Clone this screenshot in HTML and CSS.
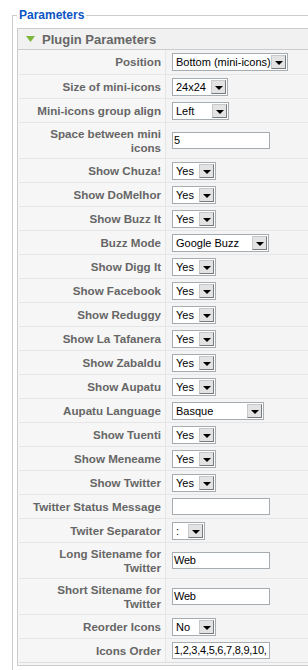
FILE: index.html
```html
<!DOCTYPE html>
<html lang="en">
<head>
    <meta charset="UTF-8">
    <title>Parameters</title>
    <link rel="stylesheet" href="styles.css">
</head>
<body>
    <fieldset class="params">
        <legend>Parameters</legend>
        <div class="pane">
            <div class="pane-title">
                <svg class="toggle" width="9" height="6" viewBox="0 0 9 6"><polygon points="0,0 9,0 4.5,6" fill="#7bb83b"/></svg>
                <span>Plugin Parameters</span>
            </div>
            <div class="paramlist">
                <div class="row">
                    <div class="key">Position</div>
                    <div class="value"><span class="sel w-position"><span class="sel-text">Bottom (mini-icons)</span><span class="sel-btn"><i></i></span></span></div>
                </div>
                <div class="row">
                    <div class="key">Size of mini-icons</div>
                    <div class="value"><span class="sel w-size"><span class="sel-text">24x24</span><span class="sel-btn"><i></i></span></span></div>
                </div>
                <div class="row">
                    <div class="key">Mini-icons group align</div>
                    <div class="value"><span class="sel w-align"><span class="sel-text">Left</span><span class="sel-btn"><i></i></span></span></div>
                </div>
                <div class="row tall">
                    <div class="key">Space between mini icons</div>
                    <div class="value"><span class="field">5</span></div>
                </div>
                <div class="row">
                    <div class="key">Show Chuza!</div>
                    <div class="value"><span class="sel w-yes"><span class="sel-text">Yes</span><span class="sel-btn"><i></i></span></span></div>
                </div>
                <div class="row">
                    <div class="key">Show DoMelhor</div>
                    <div class="value"><span class="sel w-yes"><span class="sel-text">Yes</span><span class="sel-btn"><i></i></span></span></div>
                </div>
                <div class="row">
                    <div class="key">Show Buzz It</div>
                    <div class="value"><span class="sel w-yes"><span class="sel-text">Yes</span><span class="sel-btn"><i></i></span></span></div>
                </div>
                <div class="row">
                    <div class="key">Buzz Mode</div>
                    <div class="value"><span class="sel w-buzz"><span class="sel-text">Google Buzz</span><span class="sel-btn"><i></i></span></span></div>
                </div>
                <div class="row">
                    <div class="key">Show Digg It</div>
                    <div class="value"><span class="sel w-yes"><span class="sel-text">Yes</span><span class="sel-btn"><i></i></span></span></div>
                </div>
                <div class="row">
                    <div class="key">Show Facebook</div>
                    <div class="value"><span class="sel w-yes"><span class="sel-text">Yes</span><span class="sel-btn"><i></i></span></span></div>
                </div>
                <div class="row">
                    <div class="key">Show Reduggy</div>
                    <div class="value"><span class="sel w-yes"><span class="sel-text">Yes</span><span class="sel-btn"><i></i></span></span></div>
                </div>
                <div class="row">
                    <div class="key">Show La Tafanera</div>
                    <div class="value"><span class="sel w-yes"><span class="sel-text">Yes</span><span class="sel-btn"><i></i></span></span></div>
                </div>
                <div class="row">
                    <div class="key">Show Zabaldu</div>
                    <div class="value"><span class="sel w-yes"><span class="sel-text">Yes</span><span class="sel-btn"><i></i></span></span></div>
                </div>
                <div class="row">
                    <div class="key">Show Aupatu</div>
                    <div class="value"><span class="sel w-yes"><span class="sel-text">Yes</span><span class="sel-btn"><i></i></span></span></div>
                </div>
                <div class="row">
                    <div class="key">Aupatu Language</div>
                    <div class="value"><span class="sel w-lang"><span class="sel-text">Basque</span><span class="sel-btn"><i></i></span></span></div>
                </div>
                <div class="row">
                    <div class="key">Show Tuenti</div>
                    <div class="value"><span class="sel w-yes"><span class="sel-text">Yes</span><span class="sel-btn"><i></i></span></span></div>
                </div>
                <div class="row">
                    <div class="key">Show Meneame</div>
                    <div class="value"><span class="sel w-yes"><span class="sel-text">Yes</span><span class="sel-btn"><i></i></span></span></div>
                </div>
                <div class="row">
                    <div class="key">Show Twitter</div>
                    <div class="value"><span class="sel w-yes"><span class="sel-text">Yes</span><span class="sel-btn"><i></i></span></span></div>
                </div>
                <div class="row">
                    <div class="key">Twitter Status Message</div>
                    <div class="value"><span class="field"></span></div>
                </div>
                <div class="row">
                    <div class="key">Twiter Separator</div>
                    <div class="value"><span class="sel w-sep"><span class="sel-text">:</span><span class="sel-btn"><i></i></span></span></div>
                </div>
                <div class="row tall">
                    <div class="key">Long Sitename for Twitter</div>
                    <div class="value"><span class="field">Web</span></div>
                </div>
                <div class="row tall">
                    <div class="key">Short Sitename for Twitter</div>
                    <div class="value"><span class="field">Web</span></div>
                </div>
                <div class="row">
                    <div class="key">Reorder Icons</div>
                    <div class="value"><span class="sel w-yes"><span class="sel-text">No</span><span class="sel-btn"><i></i></span></span></div>
                </div>
                <div class="row">
                    <div class="key">Icons Order</div>
                    <div class="value"><span class="field">1,2,3,4,5,6,7,8,9,10,</span></div>
                </div>
            </div>
        </div>
    </fieldset>
</body>
</html>
```

FILE: styles.css
```css
/* General styling */
html, body {
    margin: 0;
    padding: 0;
    background: #fff;
    overflow: hidden;
    font-family: "Liberation Sans", Arial, sans-serif;
    font-size: 11px;
}

/* Outer fieldset */
.params {
    width: 340px;
    margin: 8px 0 0 12px;
    padding: 6px 0 10px 4px;
    border: 1px solid #ccc;
}

.params legend {
    padding: 0 2px;
    color: #0b55c4;
    font-size: 12px;
    font-weight: bold;
    line-height: 14px;
}

/* Slider pane */
.pane {
    border: 1px solid #ccc;
    background: #f6f6f6;
    padding-bottom: 2px;
}

.pane-title {
    display: flex;
    align-items: center;
    height: 20px;
    border-bottom: 1px solid #ccc;
    background: #f1f1f1;
    color: #666;
    font-size: 13px;
    font-weight: bold;
    padding-left: 8px;
}

.pane-title .toggle {
    margin-right: 7px;
}

/* Parameter rows */
.paramlist {
    margin-left: 1px;
    border-bottom: 1px solid #ddd;
}

.row {
    display: flex;
    height: 24px;
}

.row.tall {
    height: 36px;
}

.row + .row .key,
.row + .row .value {
    border-top: 1px solid #e6e6e6;
}

.key {
    box-sizing: border-box;
    width: 147px;
    flex: none;
    display: flex;
    align-items: center;
    justify-content: flex-end;
    text-align: right;
    padding-right: 4px;
    padding-left: 6px;
    border-right: 1px solid #e6e6e6;
    color: #666;
    font-size: 11.6px;
    font-weight: bold;
    line-height: 14px;
    background: #f6f6f6;
}

.value {
    flex: 1;
    display: flex;
    align-items: center;
    padding-left: 6px;
    background: #f4f4f4;
}

/* Text inputs */
.field {
    box-sizing: border-box;
    width: 98px;
    height: 17px;
    border: 1px solid #a5acb2;
    background: #fff;
    color: #000;
    line-height: 15px;
    padding-left: 1px;
    letter-spacing: -0.25px;
    white-space: nowrap;
    overflow: hidden;
}

/* Select boxes */
.sel {
    box-sizing: border-box;
    display: flex;
    align-items: center;
    height: 18px;
    border: 1px solid #a5acb2;
    background: #fff;
    padding: 1px;
    color: #000;
    font-size: 11px;
}

.sel-text {
    flex: 1;
    padding-left: 2px;
    white-space: nowrap;
    overflow: hidden;
}

.sel-btn {
    box-sizing: border-box;
    width: 15px;
    height: 14px;
    flex: none;
    display: flex;
    align-items: center;
    justify-content: center;
    background: #e3e3e3;
    border: 1px solid #7a7a7a;
    border-top-color: #c8c8c8;
    border-left-color: #c8c8c8;
}

.sel-btn i {
    width: 0;
    height: 0;
    border-left: 4px solid transparent;
    border-right: 4px solid transparent;
    border-top: 4px solid #000;
    margin-top: 2px;
}

.w-position { width: 116px; }
.w-size { width: 56px; }
.w-align { width: 57px; }
.w-yes { width: 44px; }
.w-buzz { width: 97px; }
.w-lang { width: 92px; }
.w-sep { width: 33px; }
```
